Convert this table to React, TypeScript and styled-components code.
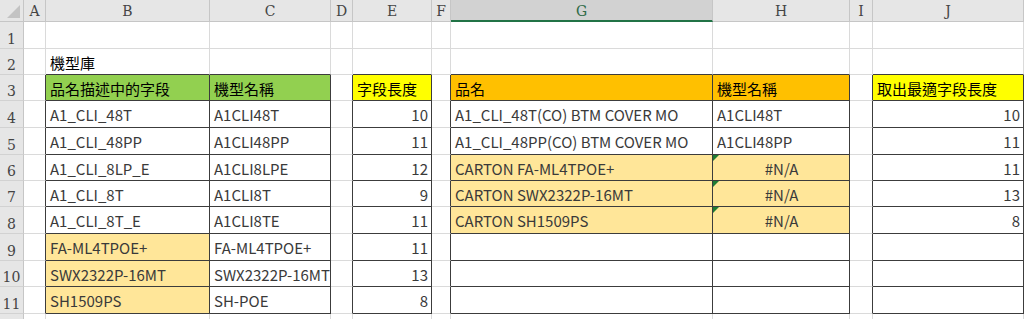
import React from "react";
import styled, { createGlobalStyle } from "styled-components";

const GlobalStyle = createGlobalStyle`
  html, body { margin: 0; padding: 0; background: #ffffff; }
  body { overflow: hidden; }
`;

type ColKey = "A" | "B" | "C" | "D" | "E" | "F" | "G" | "H" | "I" | "J";
const COLS: { key: ColKey; width: number }[] = [
  { key: "A", width: 22 },
  { key: "B", width: 164 },
  { key: "C", width: 121 },
  { key: "D", width: 22 },
  { key: "E", width: 79 },
  { key: "F", width: 19 },
  { key: "G", width: 262 },
  { key: "H", width: 137 },
  { key: "I", width: 23 },
  { key: "J", width: 151 },
];
const ROW_HEIGHTS = [27, 26, 26, 27, 27, 26, 26, 27, 27, 26, 27, 20];
const VISIBLE_ROWS = 11;
const SELECTED_COL: ColKey = "G";

type Align = "left" | "right" | "center";
type CellData = { text: string; align?: Align; bg?: string; head?: boolean; flag?: boolean };

const GREEN = "#92d050";
const YELLOW = "#ffff00";
const ORANGE = "#ffc000";
const PALE = "#ffe699";

const DATA: Record<number, Partial<Record<ColKey, CellData>>> = {
  2: { B: { text: "機型庫", head: true } },
  3: {
    B: { text: "品名描述中的字段", bg: GREEN, head: true },
    C: { text: "機型名稱", bg: GREEN, head: true },
    E: { text: "字段長度", bg: YELLOW, head: true },
    G: { text: "品名", bg: ORANGE, head: true },
    H: { text: "機型名稱", bg: ORANGE, head: true },
    J: { text: "取出最適字段長度", bg: YELLOW, head: true },
  },
  4: {
    B: { text: "A1_CLI_48T" },
    C: { text: "A1CLI48T" },
    E: { text: "10", align: "right" },
    G: { text: "A1_CLI_48T(CO) BTM COVER MO" },
    H: { text: "A1CLI48T" },
    J: { text: "10", align: "right" },
  },
  5: {
    B: { text: "A1_CLI_48PP" },
    C: { text: "A1CLI48PP" },
    E: { text: "11", align: "right" },
    G: { text: "A1_CLI_48PP(CO) BTM COVER MO" },
    H: { text: "A1CLI48PP" },
    J: { text: "11", align: "right" },
  },
  6: {
    B: { text: "A1_CLI_8LP_E" },
    C: { text: "A1CLI8LPE" },
    E: { text: "12", align: "right" },
    G: { text: "CARTON FA-ML4TPOE+", bg: PALE },
    H: { text: "#N/A", bg: PALE, align: "center", flag: true },
    J: { text: "11", align: "right" },
  },
  7: {
    B: { text: "A1_CLI_8T" },
    C: { text: "A1CLI8T" },
    E: { text: "9", align: "right" },
    G: { text: "CARTON SWX2322P-16MT", bg: PALE },
    H: { text: "#N/A", bg: PALE, align: "center", flag: true },
    J: { text: "13", align: "right" },
  },
  8: {
    B: { text: "A1_CLI_8T_E" },
    C: { text: "A1CLI8TE" },
    E: { text: "11", align: "right" },
    G: { text: "CARTON SH1509PS", bg: PALE },
    H: { text: "#N/A", bg: PALE, align: "center", flag: true },
    J: { text: "8", align: "right" },
  },
  9: {
    B: { text: "FA-ML4TPOE+", bg: PALE },
    C: { text: "FA-ML4TPOE+" },
    E: { text: "11", align: "right" },
  },
  10: {
    B: { text: "SWX2322P-16MT", bg: PALE },
    C: { text: "SWX2322P-16MT" },
    E: { text: "13", align: "right" },
  },
  11: {
    B: { text: "SH1509PS", bg: PALE },
    C: { text: "SH-POE" },
    E: { text: "8", align: "right" },
  },
};

const REGIONS: { c1: number; c2: number; r1: number; r2: number }[] = [
  { c1: 1, c2: 2, r1: 3, r2: 11 },
  { c1: 4, c2: 4, r1: 3, r2: 11 },
  { c1: 6, c2: 7, r1: 3, r2: 11 },
  { c1: 9, c2: 9, r1: 3, r2: 11 },
];
const inRegion = (r: number, c: number) =>
  REGIONS.some((g) => r >= g.r1 && r <= g.r2 && c >= g.c1 && c <= g.c2);

const GRID = "#dadada";
const EDGE = "#3c3c3c";

const Sheet = styled.div`
  display: grid;
  grid-template-columns: 24px ${COLS.map((c) => `${c.width}px`).join(" ")};
  grid-template-rows: 22px ${ROW_HEIGHTS.map((h) => `${h}px`).join(" ")};
  width: 1024px;
  height: 319px;
  overflow: hidden;
  background: #ffffff;
`;

const Corner = styled.div`
  position: relative;
  box-sizing: border-box;
  background: #e6e6e6;
  border-right: 1px solid #c6c6c6;
  border-bottom: 1px solid #c6c6c6;
  &::after {
    content: "";
    position: absolute;
    right: 3px;
    bottom: 3px;
    width: 0;
    height: 0;
    border-left: 13px solid transparent;
    border-bottom: 13px solid #c3c3c3;
  }
`;

const ColHeader = styled.div<{ $sel: boolean }>`
  box-sizing: border-box;
  display: flex;
  align-items: center;
  justify-content: center;
  background: ${(p) => (p.$sel ? "#d2d2d2" : "#e6e6e6")};
  border-right: 1px solid #c6c6c6;
  border-bottom: ${(p) => (p.$sel ? "2px solid #217346" : "1px solid #c6c6c6")};
  color: ${(p) => (p.$sel ? "#2f6b47" : "#444444")};
  font-family: "DejaVu Serif", "Liberation Serif", serif;
  font-size: 14px;
  padding-top: 1px;
`;

const RowHeader = styled.div`
  box-sizing: border-box;
  display: flex;
  align-items: flex-end;
  justify-content: center;
  padding-bottom: 1px;
  background: #e6e6e6;
  border-right: 1px solid #c6c6c6;
  border-bottom: 1px solid #d2d2d2;
  color: #444444;
  font-family: "DejaVu Serif", "Liberation Serif", serif;
  font-size: 14px;
`;

const Cell = styled.div<{ $bg?: string; $align: Align; $right: string; $bottom: string; $head?: boolean }>`
  position: relative;
  box-sizing: border-box;
  display: flex;
  align-items: center;
  justify-content: ${(p) => (p.$align === "right" ? "flex-end" : p.$align === "center" ? "center" : "flex-start")};
  padding: 1px 3px 0 4px;
  background: ${(p) => p.$bg || "#ffffff"};
  border-right: 1px solid ${(p) => p.$right};
  border-bottom: 1px solid ${(p) => p.$bottom};
  font-family: "Noto Sans CJK TC", "Noto Sans", sans-serif;
  font-size: 15px;
  color: ${(p) => (p.$head ? "#000000" : "#3a3a3a")};
  white-space: nowrap;
  overflow: hidden;
`;

const ErrorFlag = styled.span`
  position: absolute;
  left: 0;
  top: 0;
  width: 0;
  height: 0;
  border-top: 6px solid #1e7b34;
  border-right: 6px solid transparent;
`;

export default function App() {
  const rows = ROW_HEIGHTS.map((_, i) => i + 1);
  return (
    <>
      <GlobalStyle />
      <Sheet>
        <Corner />
        {COLS.map((c) => (
          <ColHeader key={c.key} $sel={c.key === SELECTED_COL}>
            {c.key}
          </ColHeader>
        ))}
        {rows.map((r) => (
          <React.Fragment key={r}>
            <RowHeader>{r <= VISIBLE_ROWS ? r : ""}</RowHeader>
            {COLS.map((c, ci) => {
              const d = DATA[r]?.[c.key];
              const right = inRegion(r, ci) || inRegion(r, ci + 1) ? EDGE : d?.bg ? d.bg : GRID;
              const bottom = inRegion(r, ci) || inRegion(r + 1, ci) ? EDGE : GRID;
              return (
                <Cell
                  key={c.key}
                  $bg={d?.bg}
                  $align={d?.align || "left"}
                  $right={right}
                  $bottom={bottom}
                  $head={d?.head}
                >
                  {d?.flag && <ErrorFlag />}
                  {d?.text}
                </Cell>
              );
            })}
          </React.Fragment>
        ))}
      </Sheet>
    </>
  );
}
